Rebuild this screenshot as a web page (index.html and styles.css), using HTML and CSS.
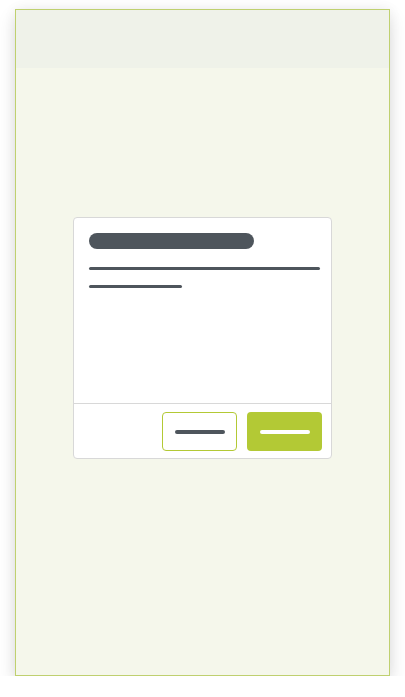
FILE: index.html
```html
<!DOCTYPE html>
<html>
<head>
<meta charset="utf-8">
<link rel="stylesheet" href="styles.css">
</head>
<body>
<div class="screen">
  <div class="header"></div>
  <div class="content">
    <div class="dialog">
      <div class="dialog-body">
        <div class="title-bar"></div>
        <div class="line line-long"></div>
        <div class="line line-short"></div>
      </div>
      <div class="dialog-footer">
        <div class="btn btn-outline"><span class="btn-line"></span></div>
        <div class="btn btn-primary"><span class="btn-line"></span></div>
      </div>
    </div>
  </div>
</div>
</body>
</html>
```
FILE: styles.css
```css
html, body {
  margin: 0;
  padding: 0;
  background: #ffffff;
  font-family: "Liberation Sans", Arial, sans-serif;
}
body {
  padding: 9px 0 0 15px;
}
.screen {
  box-sizing: border-box;
  width: 375px;
  height: 667px;
  border: 1px solid #bfd06f;
  background: #f5f7eb;
  box-shadow: 0 8px 18px rgba(0, 0, 0, 0.12), 0 0 12px rgba(0, 0, 0, 0.06);
  display: flex;
  flex-direction: column;
}
.header {
  height: 58px;
  background: #eff2e9;
  flex: none;
}
.content {
  padding: 149px 57px 0;
}
.dialog {
  box-sizing: border-box;
  height: 242px;
  background: #ffffff;
  border: 1px solid #d8d8d8;
  border-radius: 4px;
  display: flex;
  flex-direction: column;
}
.dialog-body {
  flex: 1;
  padding: 15px 11px 0 15px;
  border-bottom: 1px solid #d8d8d8;
  display: flex;
  flex-direction: column;
}
.title-bar {
  width: 165px;
  height: 16px;
  border-radius: 8px;
  background: #4e555c;
}
.line {
  height: 3px;
  border-radius: 2px;
  background: #4e555c;
}
.line-long {
  margin-top: 18px;
  width: 231px;
}
.line-short {
  margin-top: 15px;
  width: 93px;
}
.dialog-footer {
  flex: none;
  height: 54px;
  box-sizing: border-box;
  padding: 8px 9px 0 0;
  display: flex;
  justify-content: flex-end;
  align-items: flex-start;
  gap: 10px;
}
.btn {
  box-sizing: border-box;
  width: 75px;
  height: 39px;
  border-radius: 4px;
  display: flex;
  align-items: center;
  justify-content: center;
}
.btn-outline {
  border: 1px solid #b3c935;
  background: #ffffff;
}
.btn-primary {
  background: #b3c935;
}
.btn-line {
  display: block;
  width: 50px;
  height: 4px;
  border-radius: 2px;
}
.btn-outline .btn-line {
  background: #4e555c;
}
.btn-primary .btn-line {
  background: #ffffff;
}
```
